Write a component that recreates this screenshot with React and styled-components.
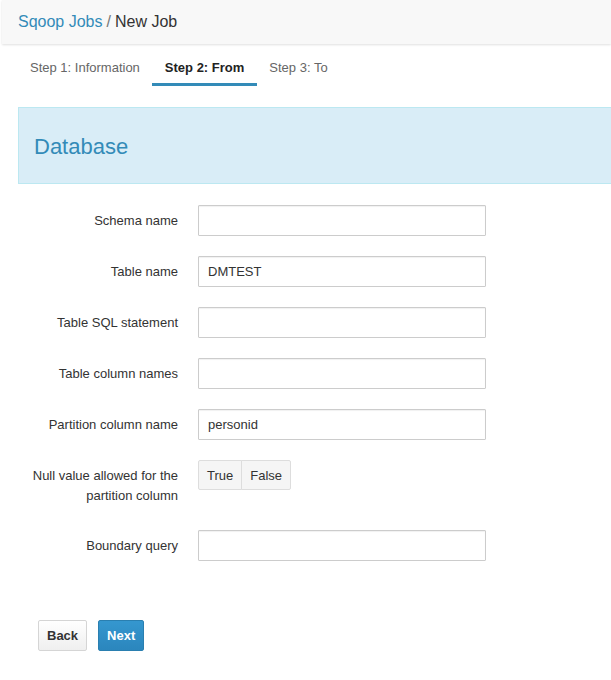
import React from 'react'
import styled, {createGlobalStyle} from 'styled-components'

const GlobalStyle = createGlobalStyle`
  body {
    margin: 0;
    background: #fff;
    font-family: "Liberation Sans", Arial, sans-serif;
    color: #333;
  }
`

const Root = styled.div`
  width: 611px;
  overflow: hidden;
`

const Header = styled.div`
  margin-left: 2px;
  height: 44px;
  background: #f8f8f8;
  box-shadow: 0 1px 2px rgba(0, 0, 0, 0.12);
  display: flex;
  align-items: center;
  padding-left: 16px;
  font-size: 16px;
  color: #333;
`

const Crumb = styled.a`
  color: #338bb8;
  text-decoration: none;
`

const Sep = styled.span`
  color: #777;
  margin: 0 4px;
`

const TabBar = styled.div`
  display: flex;
  margin: 7px 0 0 18px;
`

const Tab = styled.div`
  padding: 8px ${props => props.active ? '13px' : '12px'} 6px;
  line-height: 18px;
  font-size: 13px;
  color: ${props => props.active ? '#222' : '#666'};
  font-weight: ${props => props.active ? 'bold' : 'normal'};
  border-bottom: 3px solid ${props => props.active ? '#338bb8' : 'transparent'};
`

const Panel = styled.div`
  margin: 21px -4px 0 18px;
  height: 75px;
  background: #d9edf7;
  border: 1px solid #bce8f1;
  display: flex;
  align-items: center;
  padding: 3px 0 0 15px;
  box-sizing: border-box;
  height: 77px;
  font-size: 22px;
  color: #338bb8;
`

const Form = styled.div`
  display: grid;
  grid-template-columns: 178px 288px;
  column-gap: 20px;
  row-gap: 20px;
  margin-top: 21px;
`

const Label = styled.div`
  text-align: right;
  font-size: 13px;
  line-height: 20px;
  padding-top: 6px;
  padding-bottom: ${props => props.tall ? '4px' : '0'};
  color: #333;
`

const Input = styled.input`
  box-sizing: border-box;
  width: 288px;
  height: 31px;
  border: 1px solid #ccc;
  border-radius: 1px;
  box-shadow: inset 0 1px 1px rgba(0, 0, 0, 0.06);
  padding: 0 9px;
  font-family: "Liberation Sans", Arial, sans-serif;
  font-size: 13px;
  color: #333;
  outline: none;
`

const Toggle = styled.div`
  display: flex;
  align-self: start;
`

const ToggleButton = styled.button`
  height: 30px;
  padding: 0 8px;
  background: #f5f5f5;
  border: 1px solid #ddd;
  margin-left: ${props => props.first ? '0' : '-1px'};
  border-radius: ${props => props.first ? '2px 0 0 2px' : '0 2px 2px 0'};
  font-family: "Liberation Sans", Arial, sans-serif;
  font-size: 13px;
  color: #333;
`

const Actions = styled.div`
  display: flex;
  gap: 11px;
  margin: 59px 0 0 38px;
`

const Button = styled.button`
  height: 31px;
  padding: 0 8px;
  border-radius: 2px;
  font-family: "Liberation Sans", Arial, sans-serif;
  font-size: 13px;
  font-weight: bold;
  color: ${props => props.primary ? '#fff' : '#333'};
  border: 1px solid ${props => props.primary ? '#2a7fb0' : '#d5d5d5'};
  background: ${props => props.primary
    ? 'linear-gradient(#3597cf, #2b86bd)'
    : 'linear-gradient(#fff, #efefef)'};
`

const fields = [
  {label: 'Schema name', value: ''},
  {label: 'Table name', value: 'DMTEST'},
  {label: 'Table SQL statement', value: ''},
  {label: 'Table column names', value: ''},
  {label: 'Partition column name', value: 'personid'},
]

const App = () => (
  <Root>
    <GlobalStyle/>
    <Header>
      <Crumb href="#">Sqoop Jobs</Crumb>
      <Sep>/</Sep>
      <span>New Job</span>
    </Header>
    <TabBar>
      <Tab>Step 1: Information</Tab>
      <Tab active>Step 2: From</Tab>
      <Tab>Step 3: To</Tab>
    </TabBar>
    <Panel>Database</Panel>
    <Form>
      {fields.map(f => (
        <React.Fragment key={f.label}>
          <Label>{f.label}</Label>
          <Input defaultValue={f.value}/>
        </React.Fragment>
      ))}
      <Label tall>Null value allowed for the<br/>partition column</Label>
      <Toggle>
        <ToggleButton first>True</ToggleButton>
        <ToggleButton>False</ToggleButton>
      </Toggle>
      <Label>Boundary query</Label>
      <Input/>
    </Form>
    <Actions>
      <Button>Back</Button>
      <Button primary>Next</Button>
    </Actions>
  </Root>
)

export default App
